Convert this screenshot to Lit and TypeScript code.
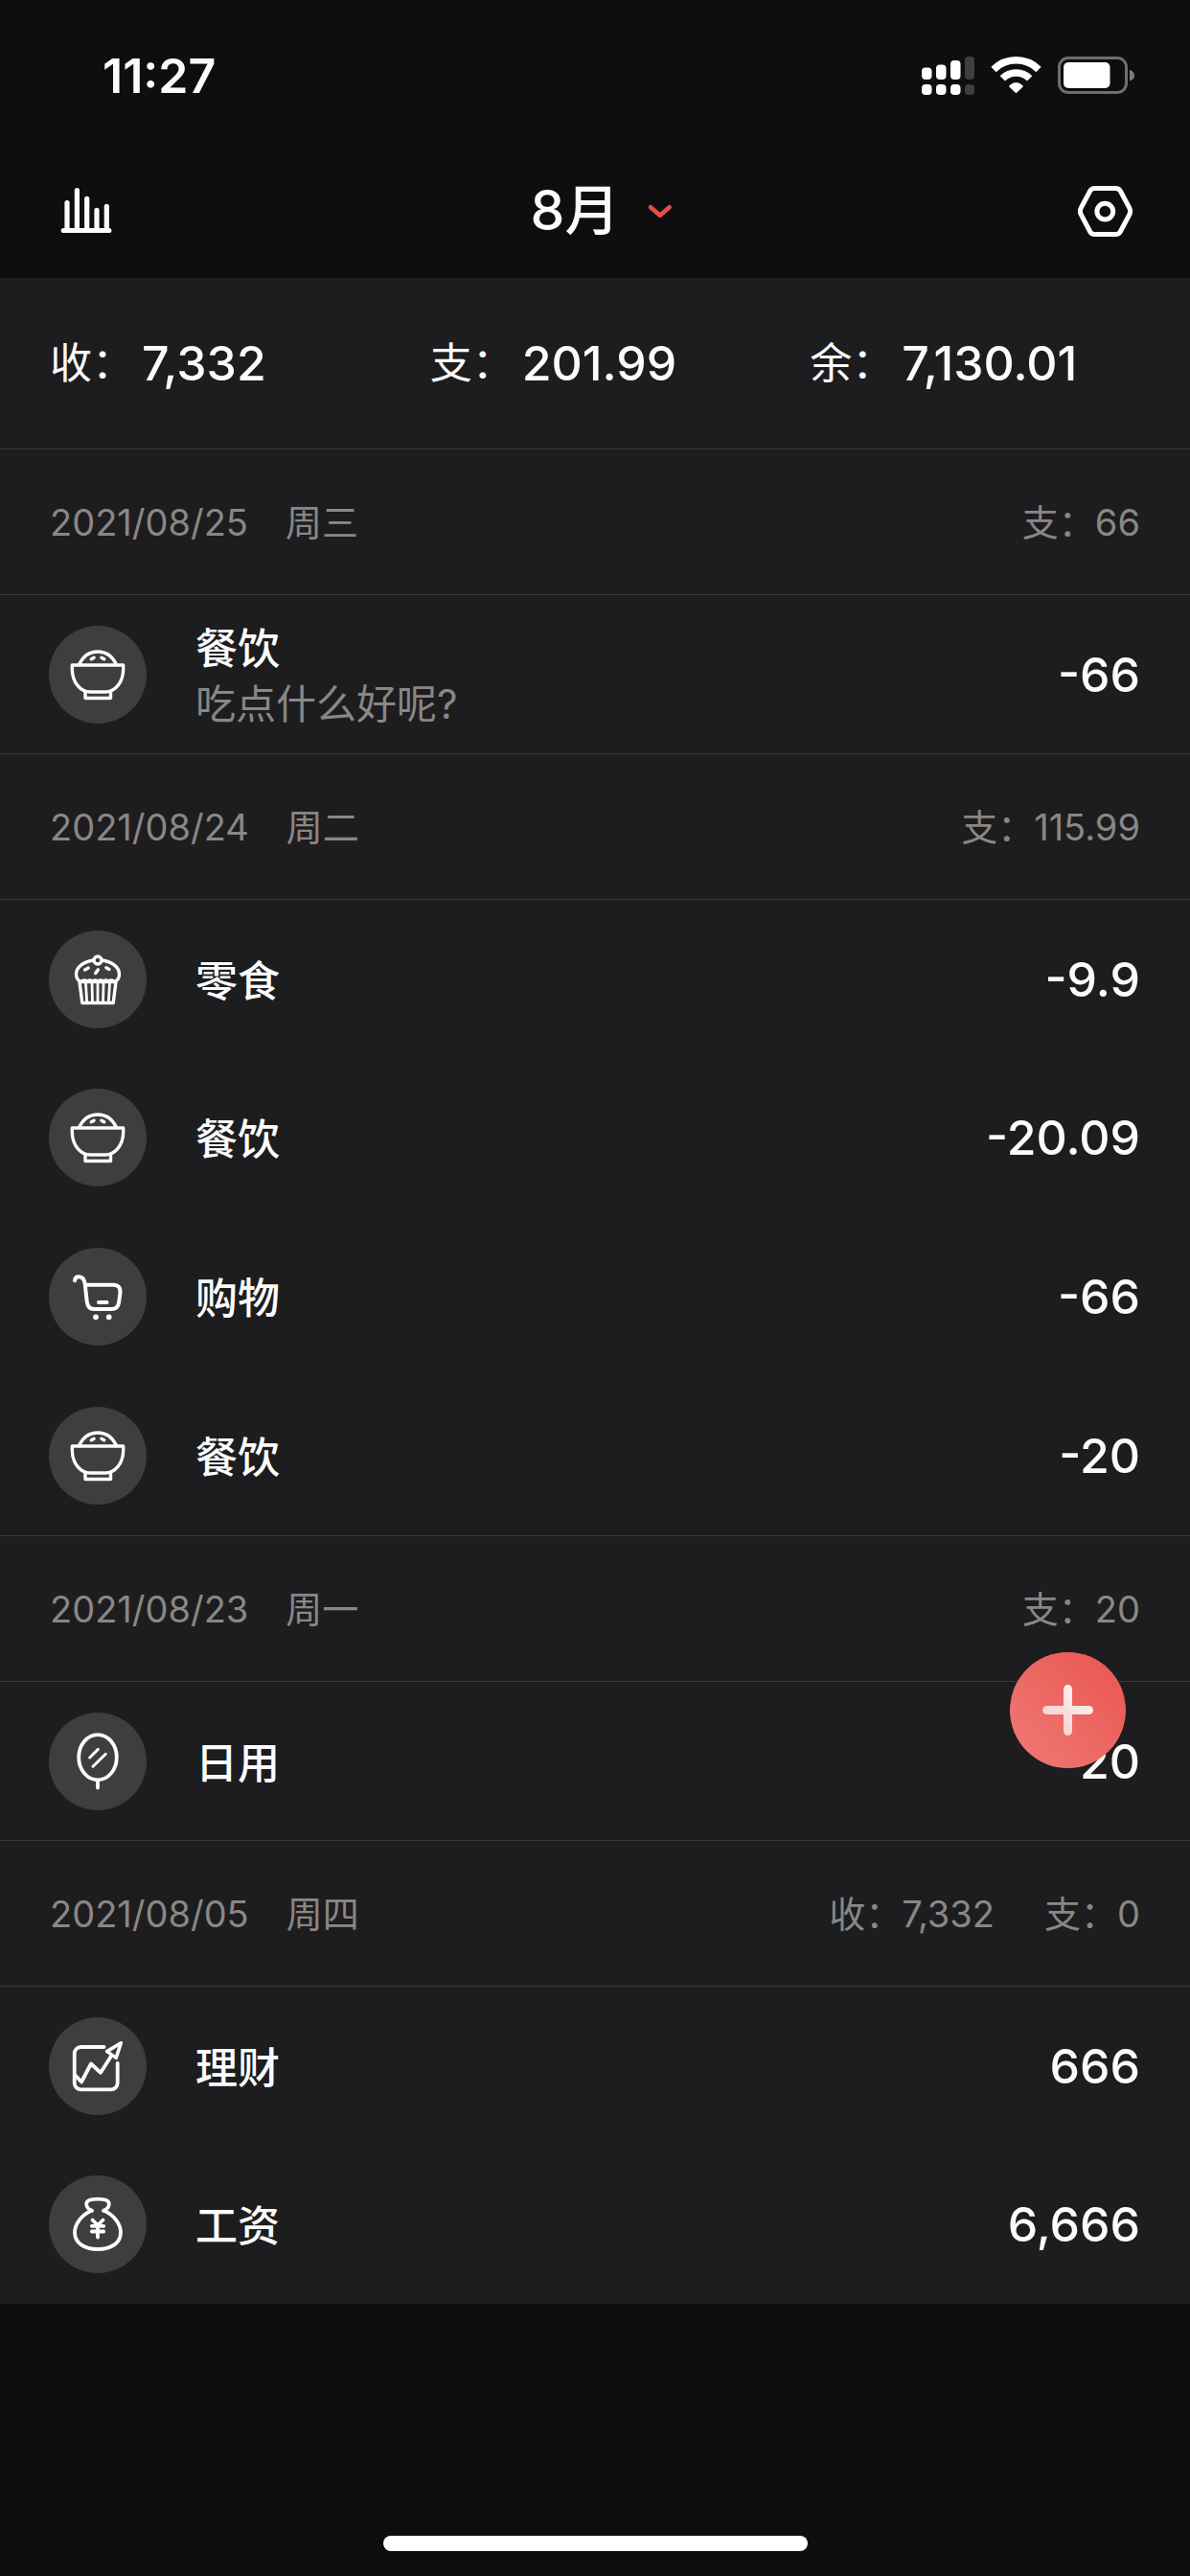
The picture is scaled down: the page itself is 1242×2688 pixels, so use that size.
import { LitElement, html, css, svg, nothing } from "lit";
import type { TemplateResult } from "lit";
import { customElement, property } from "lit/decorators.js";

type IconName = "bowl" | "cupcake" | "cart" | "mirror" | "chart" | "bag";

interface Total {
  label: string;
  value: string;
}

interface Entry {
  icon: IconName;
  title: string;
  note?: string;
  amount: string;
}

interface Day {
  date: string;
  weekday: string;
  totals: Total[];
  entries: Entry[];
}

const SUMMARY: Total[] = [
  { label: "收", value: "7,332" },
  { label: "支", value: "201.99" },
  { label: "余", value: "7,130.01" },
];

const DAYS: Day[] = [
  {
    date: "2021/08/25",
    weekday: "周三",
    totals: [{ label: "支", value: "66" }],
    entries: [{ icon: "bowl", title: "餐饮", note: "吃点什么好呢?", amount: "-66" }],
  },
  {
    date: "2021/08/24",
    weekday: "周二",
    totals: [{ label: "支", value: "115.99" }],
    entries: [
      { icon: "cupcake", title: "零食", amount: "-9.9" },
      { icon: "bowl", title: "餐饮", amount: "-20.09" },
      { icon: "cart", title: "购物", amount: "-66" },
      { icon: "bowl", title: "餐饮", amount: "-20" },
    ],
  },
  {
    date: "2021/08/23",
    weekday: "周一",
    totals: [{ label: "支", value: "20" }],
    entries: [{ icon: "mirror", title: "日用", amount: "-20" }],
  },
  {
    date: "2021/08/05",
    weekday: "周四",
    totals: [
      { label: "收", value: "7,332" },
      { label: "支", value: "0" },
    ],
    entries: [
      { icon: "chart", title: "理财", amount: "666" },
      { icon: "bag", title: "工资", amount: "6,666" },
    ],
  },
];

const ICONS: Record<IconName, TemplateResult> = {
  bowl: svg`
    <path d="M31.500 40.500C36 31 43 27 51 27s15 4 19.500 13.500"/>
    <path d="M44.300 34.800l2.800-1.600M54.900 33.200l2.800 1.600"/>
    <path d="M24.300 41h53.400v4c0 15-9.500 24-18.700 24H43c-9.200 0-18.700-9-18.700-24z"/>
    <path d="M38 69.500v6h26.500v-6"/>`,
  cupcake: svg`
    <circle cx="51" cy="31" r="4"/>
    <path d="M46.500 31C36 32.500 28.500 38.500 28.500 45.500c0 3.500 1.500 6 4 7.500M55.500 31C66 32.500 73.500 38.500 73.500 45.500c0 3.500-1.500 6-4 7.500"/>
    <path d="M32 53.500h38l-2.800 22H34.800z"/>
    <path d="M34 52.500q3-2 6 0q3-2 5.500 0q3-2 5.500 0q3-2 5.500 0q3-2 5.500 0q3-2 6 0" stroke-width="2.500"/>
    <path d="M38.500 55l1.200 20M45 55l.5 20M51 55v20M57 55l-.5 20M63.500 55l-1.200 20" stroke-width="2.800"/>
    <path d="M37.600 41l3.600-2M48.700 44.500l2.600-3.600M59.800 38.700l3.200 1.800"/>`,
  cart: svg`
    <path stroke-width="4" d="M27 34.300c.2-2.800 2-4.200 4.400-4.100 3.800.1 5.800 2.800 6.400 8.300l1.900 17.500c.7 5.500 3 8 7.500 8h18c4.500 0 7.300-2.500 7.900-7l1.300-9.500c.7-5.500-2-8.700-7-8.700H38"/>
    <path stroke-width="4" d="M52 57h8.500"/>
    <circle class="dot" cx="49" cy="72.300" r="2.900"/>
    <circle class="dot" cx="62.700" cy="72.300" r="2.900"/>`,
  mirror: svg`
    <ellipse cx="51" cy="46.700" rx="19.800" ry="23.600" stroke-width="3.800"/>
    <path stroke-width="3.800" d="M51 71v7.500"/>
    <path stroke-width="3" d="M42.700 47l8.600-8.600M46 56.300l13.300-13"/>`,
  chart: svg`
    <path stroke-width="3.800" d="M57.500 31H33.500a6.800 6.800 0 0 0-6.800 6.800v30.800a6.800 6.800 0 0 0 6.800 6.800h31.400a6.800 6.800 0 0 0 6.800-6.800V48"/>
    <path stroke-width="3.800" d="M27.500 60.500l6.500 7 10-19 10 9.300L65 40.500"/>
    <path stroke-width="3.600" d="M75.300 26.800L60.600 35.600l9.600 6.800z"/>`,
  bag: svg`
    <path stroke-width="3.800" d="M45 36.800c-3-1-5.800-3.800-5.800-7 0-3.400 4.300-5.200 11.800-5.200s11.800 1.800 11.800 5.200c0 3.200-2.800 6-5.800 7"/>
    <path stroke-width="3.800" d="M44.500 36.700C34 41 27 51 27 59.500 27 70.500 37 77 51 77s24-6.500 24-17.500C75 51 68 41 57.500 36.700"/>
    <path stroke-width="3.800" d="M45.500 46.500l5.500 5.500 5.500-5.500M51 52v12.500M44.800 52.800h12.400M44.800 58.500h12.400"/>`,
};

/** Round badge holding the line icon of a category. */
@customElement("category-icon")
export class CategoryIcon extends LitElement {
  @property() name: IconName = "bowl";

  static styles = css`
    :host {
      display: block;
      flex: none;
      width: 102px;
      height: 102px;
      border-radius: 50%;
      background: #3d3e40;
    }
    .glyph {
      display: block;
      width: 100%;
      height: 100%;
      fill: none;
      stroke: #fdfdfd;
      stroke-width: 3.4;
      stroke-linecap: round;
      stroke-linejoin: round;
    }
    .dot {
      fill: #fdfdfd;
      stroke: none;
    }
  `;

  render() {
    return html`<svg class="glyph" viewBox="0 0 102 102" aria-hidden="true">${ICONS[this.name]}</svg>`;
  }
}

/** One day of the ledger: a heading with the totals, then its entries. */
@customElement("ledger-day")
export class LedgerDay extends LitElement {
  @property({ attribute: false }) day!: Day;

  static styles = css`
    :host {
      display: block;
    }
    .heading {
      display: flex;
      align-items: center;
      justify-content: space-between;
      box-sizing: border-box;
      height: 152px;
      padding: 0 52px;
      border-top: 1px solid #38383a;
      color: #8a8785;
      line-height: 48px;
    }
    .when,
    .totals {
      display: flex;
      margin: 0;
      font-size: 38px;
      font-weight: 400;
    }
    .when {
      gap: 39px;
    }
    .totals {
      gap: 52px;
    }
    .entries {
      margin: 0;
      padding: 0;
      list-style: none;
      border-top: 1px solid #38383a;
    }
    .entry {
      display: flex;
      align-items: center;
      box-sizing: border-box;
      height: 166px;
      padding: 0 52px 0 51px;
    }
    .entry:first-child {
      height: 165px;
    }
    .text {
      flex: 1;
      padding: 4px 0 0 51px;
    }
    .title {
      display: block;
      font-size: 44px;
      line-height: 58px;
      font-weight: 500;
    }
    .note {
      display: block;
      font-size: 42px;
      line-height: 58px;
      color: #8a8785;
    }
    .amount {
      font-size: 50px;
      line-height: 60px;
      font-weight: 500;
    }
  `;

  render() {
    const { date, weekday, totals, entries } = this.day;
    return html`
      <header class="heading">
        <h2 class="when"><time>${date}</time><span>${weekday}</span></h2>
        <div class="totals">
          ${totals.map((t) => html`<span>${t.label}：${t.value}</span>`)}
        </div>
      </header>
      <ul class="entries">
        ${entries.map(
          (e) => html`
            <li class="entry">
              <category-icon .name=${e.icon}></category-icon>
              <div class="text">
                <span class="title">${e.title}</span>
                ${e.note ? html`<span class="note">${e.note}</span>` : nothing}
              </div>
              <span class="amount">${e.amount}</span>
            </li>
          `,
        )}
      </ul>
    `;
  }
}

@customElement("app-root")
export class AppRoot extends LitElement {
  static styles = css`
    :host {
      position: relative;
      display: flex;
      flex-direction: column;
      min-height: 100vh;
      background: #0e0e10;
      color: #fbfbfb;
      font-family: Inter, "Noto Sans CJK SC", sans-serif;
    }
    .status {
      display: flex;
      align-items: center;
      justify-content: space-between;
      height: 150px;
      padding: 8px 57px 0 107px;
      box-sizing: border-box;
    }
    .clock {
      font-size: 50px;
      line-height: 60px;
      font-weight: 600;
    }
    .signals {
      display: block;
      width: 224px;
      height: 42px;
    }
    .nav {
      display: grid;
      grid-template-columns: 1fr auto 1fr;
      align-items: center;
      height: 140px;
      padding: 0 58px;
    }
    button {
      display: flex;
      align-items: center;
      padding: 0;
      border: 0;
      background: none;
      color: inherit;
      font: inherit;
      cursor: pointer;
    }
    .stats {
      justify-self: start;
    }
    .settings {
      justify-self: end;
    }
    .tool {
      display: block;
      width: 60px;
      height: 60px;
    }
    .month {
      gap: 29px;
      padding-left: 15px;
      font-size: 57px;
      line-height: 70px;
      font-weight: 500;
    }
    .chevron {
      display: block;
      width: 28px;
      height: 18px;
    }
    .panel {
      background: #1d1d1f;
    }
    .summary {
      display: grid;
      grid-template-columns: repeat(3, 1fr);
      align-items: center;
      height: 178px;
      padding-left: 52px;
    }
    .sum {
      display: flex;
      align-items: center;
      gap: 8px;
    }
    .sum-label {
      font-size: 44px;
      line-height: 60px;
    }
    .sum-value {
      font-size: 50px;
      line-height: 60px;
      font-weight: 500;
    }
    .home {
      width: 443px;
      height: 16px;
      margin: auto auto 26px;
      border-radius: 8px;
      background: #fff;
    }
    .add {
      position: absolute;
      right: 67px;
      bottom: 843px;
      width: 121px;
      height: 121px;
      border-radius: 50%;
      background: linear-gradient(45deg, #ee7771 10%, #eb5853 90%);
    }
    .plus {
      display: block;
      width: 100%;
      height: 100%;
    }
  `;

  render() {
    return html`
      <div class="status">
        <time class="clock">11:27</time>
        <svg class="signals" viewBox="961 58 224 42" role="img" aria-label="信号、无线网络、电池">
          <g fill="#fff">
            <rect x="962" y="70.500" width="10.500" height="12.500" rx="4"/>
            <rect x="977" y="67.500" width="10.500" height="15.500" rx="4"/>
            <rect x="992" y="63" width="10.500" height="20" rx="4"/>
            <rect x="962" y="88" width="10.500" height="11" rx="4"/>
            <rect x="977" y="88" width="10.500" height="11" rx="4"/>
            <rect x="992" y="88" width="10.500" height="11" rx="4"/>
          </g>
          <g fill="#3f3f41">
            <rect x="1007" y="59" width="10" height="24" rx="4"/>
            <rect x="1007" y="88" width="10" height="11" rx="4"/>
          </g>
          <g fill="none" stroke="#fff" stroke-width="7.500">
            <path d="M1037 72.500a33.500 33.500 0 0 1 47 0"/>
            <path d="M1046.300 81.800a20.200 20.200 0 0 1 28.400 0"/>
          </g>
          <path fill="#fff" d="M1053.500 89.200q7-6.200 14 0a1.300 1.300 0 0 1 0 1.500l-6.300 6q-.7.700-1.400 0l-6.300-6a1.300 1.300 0 0 1 0-1.500z"/>
          <rect x="1105.500" y="60.500" width="70" height="36" rx="9.500" fill="none" stroke="#6e6e70" stroke-width="3"/>
          <rect x="1110" y="65" width="48.500" height="27" rx="5" fill="#fff"/>
          <path fill="#7c7c7e" d="M1179 73c3.400.8 5 3 5 5.700s-1.600 4.900-5 5.700z"/>
        </svg>
      </div>

      <nav class="nav">
        <button class="stats" aria-label="统计">
          <svg class="tool" viewBox="58 190 60 60" fill="none" stroke="#fdfdfd" stroke-width="5.200" stroke-linecap="round" aria-hidden="true">
            <path d="M70 240V211.500M80.400 240V198.500M90.700 240V207.300M101 240V219.300M111.300 240V215.300"/>
            <path d="M66.300 240.500h47.500"/>
          </svg>
        </button>
        <button class="month">
          <span>8月</span>
          <svg class="chevron" viewBox="675 211 28 18" fill="none" stroke="#e84d46" stroke-width="4.600" stroke-linecap="round" stroke-linejoin="round" aria-hidden="true">
            <path d="M679 216.300l9.800 8.500 9.900-8.500"/>
          </svg>
        </button>
        <button class="settings" aria-label="设置">
          <svg class="tool" viewBox="1124 190 60 60" fill="none" stroke="#fdfdfd" stroke-width="5" aria-hidden="true">
            <path d="M1142.500 196.500h22a5.500 5.500 0 0 1 4.800 2.800l9.300 17.300a8 8 0 0 1 0 7.600l-9.300 17.500a5.500 5.500 0 0 1-4.800 2.800h-22a5.500 5.500 0 0 1-4.800-2.800l-9.300-17.500a8 8 0 0 1 0-7.600l9.300-17.300a5.500 5.500 0 0 1 4.800-2.800z"/>
            <circle cx="1153.300" cy="220.600" r="8.400"/>
          </svg>
        </button>
      </nav>

      <main class="panel">
        <section class="summary">
          ${SUMMARY.map(
            (s) => html`
              <div class="sum">
                <span class="sum-label">${s.label}：</span>
                <span class="sum-value">${s.value}</span>
              </div>
            `,
          )}
        </section>
        ${DAYS.map((d) => html`<ledger-day .day=${d}></ledger-day>`)}
      </main>

      <div class="home"></div>

      <button class="add" aria-label="记一笔">
        <svg class="plus" viewBox="0 0 121 121" aria-hidden="true">
          <defs>
            <linearGradient id="shine" x1="0" y1="1" x2="1" y2="0">
              <stop offset=".2" stop-color="#f8cfcf"/>
              <stop offset=".8" stop-color="#fdf0f0"/>
            </linearGradient>
          </defs>
          <path fill="url(#shine)" d="M60.500 34a4.500 4.500 0 0 1 4.500 4.500V56h17.500a4.500 4.500 0 0 1 0 9H65v17.500a4.500 4.500 0 0 1-9 0V65H38.500a4.500 4.500 0 0 1 0-9H56V38.500a4.500 4.500 0 0 1 4.500-4.500z"/>
        </svg>
      </button>
    `;
  }
}
